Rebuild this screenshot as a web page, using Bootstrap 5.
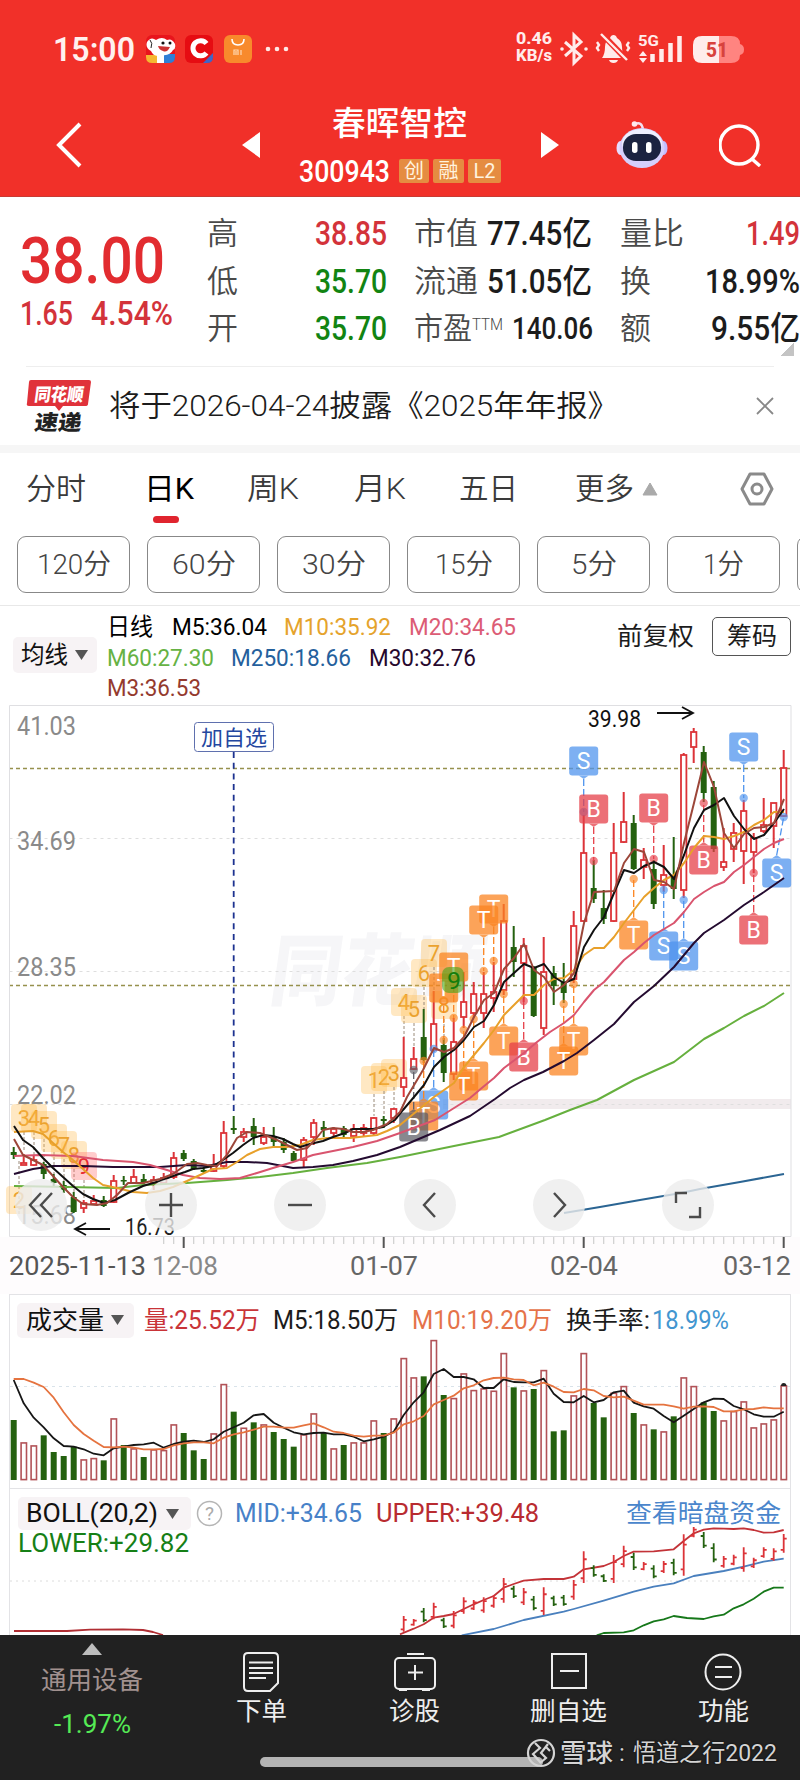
<!DOCTYPE html>
<html lang="zh-CN">
<head>
    <meta charset="UTF-8">
    <meta name="viewport" content="width=device-width, initial-scale=1.0">
    <title>春晖智控 300943</title>
    <link href="https://cdn.jsdelivr.net/npm/bootstrap@5.3.0/dist/css/bootstrap.min.css" rel="stylesheet">
    <style>
        body {
            width: 800px;
            height: 1780px;
            overflow: hidden;
            background: #fff;
            color: #1c1c1c;
            font-family: Roboto, "Noto Sans CJK SC", sans-serif;
            line-height: 1;
        }
        svg {
            display: block;
            flex-shrink: 0;
        }
        [data-w] {
            display: inline-block;
            flex-shrink: 0;
            white-space: nowrap;
            transform-origin: left center;
        }
        .app-head {
            height: 197px;
            background: #f13029;
            color: #fff;
            border-bottom: 1px solid #c93a33;
        }
        .status-row {
            height: 97px;
            padding-left: 53px;
        }
        .clock {
            font-size: 34px;
            font-weight: 600;
            color: #fff1ef;
        }
        .net-speed {
            font-size: 17px;
            line-height: 17px;
            font-weight: 800;
            color: #ffeceb;
            margin-left: 227px;
            margin-top: -3px;
        }
        .title-row {
            display: grid;
            grid-template-columns: 186px 57px 242px 75px 103px 42px;
            height: 96px;
            padding-left: 56px;
        }
        .stock-name {
            font-size: 33px;
            font-weight: 500;
            line-height: 48px;
            padding-left: 33px;
            margin-top: -4px;
            margin-bottom: 4px;
        }
        .stock-name span {
            margin-top: -3px;
        }
        .stock-code {
            font-size: 31px;
            font-weight: 500;
        }
        .tag {
            height: 24px;
            background: #e58c41;
            border-radius: 2px;
            color: #fff3df;
            font-size: 20px;
            line-height: 25px;
            text-align: center;
        }
        .quote {
            height: 169px;
            padding: 13px 0 13px 20px;
            display: grid;
            grid-template-columns: 187px 207px 206px 180px;
            font-size: 33px;
            font-weight: 500;
        }
        .quote .line {
            height: 47.5px;
            display: flex;
            align-items: center;
        }
        .quote .lbl {
            font-size: 31px;
            font-weight: 350;
            color: #4a4a4a;
        }
        .price {
            font-size: 65px;
            line-height: 65px;
            margin-top: 19px;
            color: #e22c30;
        }
        .up { color: #d3333a; }
        .down { color: #128412; }
        .corner {
            width: 13px;
            height: 13px;
            right: 6px;
            top: 343px;
            background: linear-gradient(135deg, transparent 50%, #c4c4c4 50%);
        }
        .news {
            height: 79px;
            margin: 0 26px;
            border-top: 1px solid #eee;
            font-size: 30px;
            font-weight: 350;
        }
        .news .logo-box {
            width: 65px;
            margin-right: 18px;
            overflow: visible;
        }
        .band {
            height: 8px;
            background: #f6f6f6;
        }
        .tabs {
            height: 83px;
            padding: 1px 0 0 26px;
            display: grid;
            grid-template-columns: 118px 103px 107px 105px 116px 165px 40px;
            font-size: 30px;
            font-weight: 350;
            color: #3a3a3a;
        }
        .tabs > div {
            height: 70px;
            display: flex;
            align-items: center;
        }
        .tab-on {
            color: #000;
            font-weight: 400;
            position: relative;
        }
        .tab-on::after {
            content: "";
            position: absolute;
            left: 9px;
            top: 62px;
            width: 26px;
            height: 7px;
            border-radius: 4px;
            background: #e0242e;
        }
        .pills {
            height: 70px;
            padding-left: 17px;
            gap: 17px;
            overflow: hidden;
            border-bottom: 1px solid #e8e8e8;
        }
        .pill {
            flex: 0 0 113px;
            height: 57px;
            border: 1px solid #888;
            border-radius: 9px;
            font-size: 28px;
            font-weight: 350;
            color: #444;
        }
        .ma-bar {
            height: 99px;
            font-size: 24px;
        }
        .drop {
            background: #f7f3f5;
            border-radius: 5px;
            color: #111;
        }
        .drop-ma {
            width: 84px;
            height: 36px;
            margin: 31px 10px 0 13px;
            padding-left: 8px;
        }
        .ma-list {
            padding-top: 6px;
        }
        .ma-list .line {
            height: 30.5px;
            display: flex;
            align-items: center;
        }
        .fq {
            font-size: 25px;
            height: 60px;
        }
        .chip-btn {
            width: 79px;
            height: 39px;
            border: 1px solid #555;
            border-radius: 5px;
            margin-left: 18px;
        }
        .drop-vol {
            width: 117px;
            height: 35px;
            padding-left: 9px;
            margin-right: 10px;
        }
        .panel {
            position: relative;
            margin: 0 9px;
            border: 1px solid #e3e3e6;
        }
        .vol-panel { height: 195px; }
        .vol-head {
            height: 50px;
            padding-left: 7px;
            font-size: 25px;
        }
        .boll-panel {
            height: 146px;
            border-width: 0 1px;
            overflow: hidden;
        }
        .boll-head {
            height: 40px;
            padding: 9px 0 0 8px;
            font-size: 25px;
        }
        .boll-low {
            padding: 2px 0 0 8px;
            font-size: 25px;
            color: #168016;
        }
        .drop-boll {
            width: 173px;
            height: 33px;
            padding-left: 8px;
            margin-right: 5px;
        }
        .layer {
            position: absolute;
            left: -10px;
            top: 0;
        }
        .bottom-bar {
            height: 145px;
            background: #212121;
            color: #eee;
            display: grid;
            grid-template-columns: 184px 154px 153px 155px 154px;
            font-size: 25px;
        }
        .bottom-bar > div {
            display: flex;
            flex-direction: column;
            align-items: center;
        }
        .act { padding-top: 17px; }
        .act svg { margin-bottom: 7px; }
        .act span { line-height: 26px; }
        .home-line {
            position: absolute;
            left: 260px;
            top: 1757px;
            width: 283px;
            height: 10px;
            border-radius: 5px;
            background: #b4b4b4;
        }
        .sign {
            position: absolute;
            left: 526px;
            top: 1738px;
            height: 30px;
            color: #d4d4d4;
            font-size: 24px;
            text-shadow: 0 0 2px #000;
        }
    </style>
</head>
<body>
    <div class="app-head">
        <div class="status-row d-flex align-items-center">
            <span class="clock" data-w="82">15:00</span>
            <svg width="106" height="30" viewBox="146 34 106 30" style="margin-left:11px">
                <rect x="146" y="35" width="29" height="28" rx="6" fill="#e8141c"/>
                <path d="M146 55h11v8h-5q-6 0-6-6z" fill="#f5b731"/><path d="M157 54h7v9h-7z" fill="#fff"/><path d="M164 54h11v3q0 6-6 6h-5z" fill="#2f7fd6"/>
                <path d="M147 42q4-6 9-2 6-4 11 0 5-2 8 4 1 5-2 6-3 6-11 5-8 3-11-4-6-3-4-9z" fill="#fff"/>
                <path d="M158 46l12 1q-3 6-7 4-4-1-5-5z" fill="#c33"/><circle cx="163" cy="43" r="1.600" fill="#111"/><circle cx="170" cy="43" r="1.500" fill="#111"/>
                <path d="M150 40q3 3 1 8" stroke="#222" fill="none"/>
                <rect x="185" y="35" width="28" height="28" rx="6" fill="#e60c12"/>
                <path d="M206.500 43.500a7.600 7.600 0 1 0 0 9.500" stroke="#fff" stroke-width="5" fill="none"/>
                <path d="M203 63l10-10v4q0 6-6 6z" fill="#3f66c8"/>
                <rect x="224" y="35" width="28" height="28" rx="6" fill="#f88a2c"/>
                <path d="M232 39q0 6 6 6t6-6" stroke="#fff" stroke-width="1.600" fill="none"/>
                <path d="M234 55v-5h4v5m-2-4v4m5-5v5" stroke="#ffd9b4" stroke-width="1.200" fill="none"/>
            </svg>
            <svg width="24" height="6" viewBox="0 0 24 6" style="margin-left:13px"><g fill="#ffe9e6"><circle cx="3" cy="3" r="2.300"/><circle cx="12" cy="3" r="2.300"/><circle cx="21" cy="3" r="2.300"/></g></svg>
            <div class="net-speed"><span data-w="36">0.46</span><br><span data-w="36">KB/s</span></div>
            <svg width="185" height="36" viewBox="559 30 185 36" style="margin-left:7px" fill="none" stroke="#ffeceb">
                <path d="M565 41l16 14-7 7V34l7 7-16 14" stroke-width="3"/>
                <circle cx="562" cy="48" r="1.800" fill="#ffeceb" stroke="none"/><circle cx="586" cy="48" r="1.800" fill="#ffeceb" stroke="none"/>
                <path d="M602 57q3-4 3-11 0-6 5-9 1-3 3.500-3t3.500 3q5 3 5 9 0 7 3 11z" fill="#ffeceb" stroke="none"/><path d="M609 59h9q-1 3-4.500 3t-4.500-3z" fill="#ffeceb" stroke="none"/>
                <path d="M602 33l25 26" stroke="#f13029" stroke-width="6"/><path d="M601 33l26 26" stroke-width="2.400"/>
                <path d="M597 41l2 3-2 3 2 3m30-9l-2 3 2 3-2 3" stroke-width="2.400"/>
                <path d="M639 55l4-5 4 5zM639 57l4 5 4-5z" fill="#ffeceb" stroke="none"/>
                <path d="M652.500 61v-8M661.500 61v-13M670.500 61V42M679.500 61V35" stroke-width="4.500"/>
                <text x="638" y="44.500" font-size="15" font-weight="700" fill="#ffeceb" stroke="none" textLength="21" lengthAdjust="spacingAndGlyphs">5G</text>
                <path d="M702 35h17v27h-17q-9 0-9-9v-9q0-9 9-9z" fill="#ffeceb" stroke="none"/>
                <path d="M719 35h12q9 0 9 8 4 1 4 5.500t-4 5.500q0 8-9 8h-12z" fill="#ff8480" stroke="none"/>
                <text x="706" y="55.500" font-size="21" font-weight="800" fill="#d8423d" stroke="none" textLength="22" lengthAdjust="spacingAndGlyphs">51</text>
            </svg>
        </div>
        <div class="title-row align-items-center">
            <svg width="26" height="46" viewBox="0 0 26 46"><path d="M24 2L3 23l21 21" fill="none" stroke="#fff" stroke-width="4"/></svg>
            <svg width="18" height="26" viewBox="0 0 18 26"><path d="M18 0v26L0 13z" fill="#fff"/></svg>
            <div>
                <div class="stock-name"><span data-w="135">春晖智控</span></div>
                <div class="d-flex align-items-center pt-1">
                    <span class="stock-code" data-w="91">300943</span>
                    <span class="tag" style="width:30px;margin-left:9px">创</span>
                    <span class="tag" style="width:31px;margin-left:4px">融</span>
                    <span class="tag" style="width:33px;margin-left:4px">L2</span>
                </div>
            </div>
            <svg width="18" height="26" viewBox="0 0 18 26"><path d="M0 0v26l18-13z" fill="#fff"/></svg>
            <svg width="52" height="50" viewBox="0 0 52 50">
                <path d="M19 4q7-3 8 6" fill="none" stroke="#f4dff0" stroke-width="2.500"/><circle cx="18.500" cy="4" r="2.800" fill="#ffe9ee"/>
                <ellipse cx="4.500" cy="28" rx="4" ry="7" fill="#e6dcff"/><ellipse cx="47.500" cy="28" rx="4" ry="7" fill="#c3bcff"/>
                <ellipse cx="26" cy="28" rx="22.500" ry="20" fill="#d5cffb"/><ellipse cx="26" cy="23" rx="20" ry="14" fill="#eef0ff"/>
                <rect x="7" y="14" width="38" height="27" rx="13" fill="#1b2340"/>
                <rect x="16" y="22" width="5.500" height="11" rx="2.700" fill="#fff"/><rect x="30" y="22" width="5.500" height="11" rx="2.700" fill="#fff"/>
            </svg>
            <svg width="44" height="44" viewBox="0 0 44 44" fill="none" stroke="#fff" stroke-width="3.400"><circle cx="20" cy="22" r="19"/><path d="M33 36l8 7"/></svg>
        </div>
    </div>

    <div class="quote">
        <div>
            <div class="price"><span data-w="145">38.00</span></div>
            <div class="up d-flex" style="margin-top:3px"><span data-w="53">1.65</span><span data-w="82" style="margin-left:18px">4.54%</span></div>
        </div>
        <div>
            <div class="line"><span class="lbl" data-w="31">高</span><span class="up" data-w="72" style="margin-left:77px">38.85</span></div>
            <div class="line"><span class="lbl" data-w="31">低</span><span class="down" data-w="72" style="margin-left:77px">35.70</span></div>
            <div class="line"><span class="lbl" data-w="31">开</span><span class="down" data-w="72" style="margin-left:77px">35.70</span></div>
        </div>
        <div>
            <div class="line"><span class="lbl" data-w="64">市值</span><span data-w="105" style="margin-left:9px">77.45亿</span></div>
            <div class="line"><span class="lbl" data-w="64">流通</span><span data-w="105" style="margin-left:9px">51.05亿</span></div>
            <div class="line"><span class="lbl" data-w="58">市盈</span><span class="lbl fs-6 pb-2" data-w="31">TTM</span><span data-w="81" style="margin-left:9px;font-size:31px">140.06</span></div>
        </div>
        <div>
            <div class="line justify-content-between"><span class="lbl" data-w="64">量比</span><span class="up" data-w="54">1.49</span></div>
            <div class="line justify-content-between"><span class="lbl" data-w="31">换</span><span data-w="95">18.99%</span></div>
            <div class="line justify-content-between"><span class="lbl" data-w="31">额</span><span data-w="89">9.55亿</span></div>
        </div>
        <div class="corner position-absolute"></div>
    </div>

    <div class="news d-flex align-items-center">
        <svg class="logo-box" width="65" height="54" viewBox="26 378 65 54" font-weight="900" font-size="18" font-family="Noto Sans CJK SC">
            <path d="M31 379h58q2 0 2 2l-3 22q0 2-3 2H63l-4 5-4-5H29q-3 0-2-3l2-21q0-2 2-2z" fill="#e0323a"/>
            <g transform="skewX(-8)"><text x="90" y="400" fill="#fff" textLength="49" lengthAdjust="spacingAndGlyphs">同花顺</text><text x="94" y="429" fill="#222" textLength="47" lengthAdjust="spacingAndGlyphs" font-size="21">速递</text></g>
        </svg>
        <span data-w="510">将于2026-04-24披露《2025年年报》</span>
        <svg class="ms-auto" width="18" height="18" viewBox="0 0 18 18"><path d="M1 1l16 16M17 1L1 17" stroke="#888" stroke-width="1.800"/></svg>
    </div>
    <div class="band"></div>

    <div class="tabs">
        <div><span data-w="60">分时</span></div>
        <div class="tab-on"><span data-w="50">日K</span></div>
        <div><span data-w="52">周K</span></div>
        <div><span data-w="52">月K</span></div>
        <div><span data-w="59">五日</span></div>
        <div><span data-w="59">更多</span><svg class="ms-2" width="16" height="14" viewBox="0 0 16 14"><path d="M8 1l7 12H1z" fill="#aaa" stroke="#aaa" stroke-linejoin="round"/></svg></div>
        <div><svg width="34" height="34" viewBox="0 0 34 34" fill="none" stroke="#8a8a8a" stroke-width="3" stroke-linejoin="round"><path d="M10 2h14l8 15-8 15H10L2 17z"/><circle cx="17" cy="17" r="5"/></svg></div>
    </div>
    <div class="pills d-flex">
        <div class="pill d-flex align-items-center justify-content-center"><span data-w="74">120分</span></div>
        <div class="pill d-flex align-items-center justify-content-center"><span data-w="64">60分</span></div>
        <div class="pill d-flex align-items-center justify-content-center"><span data-w="64">30分</span></div>
        <div class="pill d-flex align-items-center justify-content-center"><span data-w="58">15分</span></div>
        <div class="pill d-flex align-items-center justify-content-center"><span data-w="46">5分</span></div>
        <div class="pill d-flex align-items-center justify-content-center"><span data-w="41">1分</span></div>
        <div class="pill"></div>
    </div>

    <div class="ma-bar d-flex">
        <div class="drop drop-ma d-flex align-items-center"><span data-w="47">均线</span><svg style="margin-left:7px" width="13" height="10"><path d="M0 0h13l-6.500 10z" fill="#555"/></svg></div>
        <div class="ma-list">
            <div class="line"><span data-w="46" class="text-black">日线</span><span data-w="95" class="text-black" style="margin-left:19px">M5:36.04</span><span data-w="107" style="margin-left:17px;color:#e5a32c">M10:35.92</span><span data-w="107" style="margin-left:18px;color:#dc5c75">M20:34.65</span></div>
            <div class="line"><span data-w="107" style="color:#66b244">M60:27.30</span><span data-w="120" style="margin-left:17px;color:#24609c">M250:18.66</span><span data-w="107" style="margin-left:18px;color:#27082d">M30:32.76</span></div>
            <div class="line"><span data-w="94" style="color:#943a2e">M3:36.53</span></div>
        </div>
        <div class="fq d-flex align-items-center ms-auto" style="margin-right:9px"><span data-w="77">前复权</span><div class="chip-btn d-flex align-items-center justify-content-center"><span data-w="50">筹码</span></div></div>
    </div>

    <svg id="kline" width="800" height="589" viewBox="0 705 800 589"></svg>

    <div class="panel vol-panel">
        <svg class="layer" id="volume" width="800" height="193" viewBox="0 1295 800 193"></svg>
        <div class="vol-head position-relative d-flex align-items-center">
            <div class="drop drop-vol d-flex align-items-center"><span data-w="78">成交量</span><svg style="margin-left:7px" width="13" height="10"><path d="M0 0h13l-6.500 10z" fill="#555"/></svg></div>
            <span data-w="116" style="color:#c93438">量:25.52万</span>
            <span data-w="125" style="margin-left:13px">M5:18.50万</span>
            <span data-w="140" style="margin-left:14px;color:#e5734a">M10:19.20万</span>
            <span data-w="84" style="margin-left:14px">换手率:</span>
            <span data-w="77" style="margin-left:2px;color:#4396d0">18.99%</span>
        </div>
    </div>
    <div class="panel boll-panel">
        <svg class="layer" id="boll" width="800" height="146" viewBox="0 1489 800 146"></svg>
        <div class="boll-head position-relative d-flex align-items-center">
            <div class="drop drop-boll d-flex align-items-center"><span data-w="132">BOLL(20,2)</span><svg class="ms-2" width="13" height="10"><path d="M0 0h13l-6.500 10z" fill="#555"/></svg></div>
            <svg width="27" height="27" viewBox="0 0 27 27"><circle cx="13.500" cy="13.500" r="12" fill="none" stroke="#b5b5b5" stroke-width="1.500"/><text x="13.500" y="20" font-size="19" fill="#aaa" text-anchor="middle">?</text></svg>
            <span data-w="127" style="margin-left:12px;color:#4781c8">MID:+34.65</span>
            <span data-w="163" style="margin-left:14px;color:#b92b30">UPPER:+39.48</span>
            <span data-w="155" class="ms-auto" style="margin-right:9px;color:#4a86cc">查看暗盘资金</span>
        </div>
        <div class="boll-low position-relative"><span data-w="171">LOWER:+29.82</span></div>
    </div>

    <div class="bottom-bar">
        <div>
            <svg width="20" height="12" style="margin-top:8px"><path d="M10 0l10 12H0z" fill="#bdbdbd"/></svg>
            <span data-w="102" style="margin-top:13px;color:#a1918f">通用设备</span>
            <span data-w="77" style="margin-top:19px;color:#55ea55">-1.97%</span>
        </div>
        <div class="act">
            <svg width="36" height="40" viewBox="0 0 36 40" fill="none" stroke="#eee" stroke-width="2"><path d="M5 1h26q4 0 4 4v26l-8 8H5q-4 0-4-4V5q0-4 4-4z"/><path d="M6 10.500h24M6 16h24M6 21h24M6 26h17" stroke-width="1.800"/></svg>
            <span data-w="51">下单</span>
        </div>
        <div class="act">
            <svg width="42" height="40" viewBox="0 0 42 40" fill="none" stroke="#eee" stroke-width="2"><rect x="1" y="6" width="40" height="31" rx="4"/><path d="M13 2h17M21 13v15M14 20.500h15M5 38h8m15 0h8"/></svg>
            <span data-w="51">诊股</span>
        </div>
        <div class="act">
            <svg width="36" height="40" viewBox="0 0 36 40" fill="none" stroke="#eee" stroke-width="2"><path d="M1 2h34v34H1zM9 19h19"/></svg>
            <span data-w="77">删自选</span>
        </div>
        <div class="act">
            <svg width="38" height="40" viewBox="0 0 38 40" fill="none" stroke="#eee" stroke-width="2"><circle cx="19" cy="20" r="17.500"/><path d="M11 15h17M11 25h17"/></svg>
            <span data-w="51">功能</span>
        </div>
    </div>
    <div class="home-line"></div>
    <div class="sign d-flex align-items-center">
        <svg width="30" height="30" viewBox="0 0 30 30" fill="none" stroke="#d4d4d4" stroke-width="2.200"><circle cx="15" cy="15" r="13"/><path d="M9 5l5 5-7 6 8 9M22 6l-7 9 5 5-6 5M20 9l4 4"/></svg>
        <span data-w="53" style="margin-left:4px;font-size:25px;font-weight:500">雪球</span>
        <span style="margin:0 8px 0 6px">:</span>
        <span data-w="144">悟道之行2022</span>
    </div>

    <script src="https://cdn.jsdelivr.net/npm/bootstrap@5.3.0/dist/js/bootstrap.bundle.min.js"></script>
    <script>
        const RED = '#dc3338';
        const GREEN = '#24610f';
        const xAt = i => 13.7 + i * 10;

        // condense each label to its column width
        document.querySelectorAll('[data-w]').forEach(el => {
            const natural = el.getBoundingClientRect().width;
            const w = Number(el.dataset.w);
            el.style.transform = `scaleX(${w / natural})`;
            el.style.marginRight = (w - natural + (parseFloat(getComputedStyle(el).marginRight) || 0)) + 'px';
        });

        function poly(points, color, width) {
            return `<polyline points="${points}" fill="none" stroke="${color}" stroke-width="${width || 1.8}" stroke-linejoin="round"/>`;
        }
        function label(x, y, text, w, size, color, extra) {
            return `<text x="${x}" y="${y}" font-size="${size}" fill="${color}" textLength="${w}" lengthAdjust="spacingAndGlyphs" ${extra || ''}>${text}</text>`;
        }

        // colour, high, body top, body bottom, low
        const candles = [
            ['g',1147,1152,1155,1159],['r',1154,1163,1165,1165],['r',1156,1160,1165,1166],['g',1162,1164,1174,1179],['g',1174,1179,1183,1186],
            ['g',1181,1185,1190,1193],['g',1192,1197,1212,1213],['r',1200,1203,1208,1213],['r',1195,1201,1204,1205],['g',1196,1200,1206,1207],
            ['r',1175,1181,1202,1203],['g',1176,1180,1181,1185],['r',1169,1177,1183,1184],['g',1174,1179,1183,1185],['r',1176,1180,1183,1190],
            ['r',1173,1178,1183,1185],['r',1152,1158,1177,1179],['g',1150,1153,1159,1161],['g',1159,1161,1169,1170],['g',1167,1170,1172,1173],
            ['r',1154,1166,1171,1172],['r',1121,1133,1166,1169],['g',1116,1128,1130,1134],['r',1128,1132,1137,1142],['g',1118,1126,1137,1145],
            ['r',1127,1137,1143,1145],['g',1127,1136,1142,1147],['g',1138,1142,1150,1153],['g',1151,1153,1161,1162],['r',1137,1140,1160,1167],
            ['r',1119,1123,1137,1145],['g',1121,1127,1130,1137],['r',1127,1129,1133,1136],['g',1126,1128,1135,1137],['r',1124,1129,1136,1142],
            ['r',1124,1128,1133,1137],['r',1117,1118,1133,1135],['g',1116,1119,1121,1128],['r',1108,1109,1118,1123],['r',1037,1078,1087,1097],
            ['r',1047,1059,1069,1070],['g',1009,1037,1060,1063],['r',991,1024,1050,1052],['g',1038,1045,1073,1082],['r',1018,1042,1074,1080],
            ['r',972,1002,1017,1028],['r',982,994,1013,1018],['r',972,994,1013,1028],['r',962,992,998,1012],['r',904,921,990,995],
            ['g',926,947,962,977],['r',938,946,963,1002],['g',966,968,1016,1017],['r',937,972,1028,1035],['g',966,973,986,1005],
            ['g',963,982,993,1003],['r',911,926,979,983],['r',815,853,921,922],['g',860,888,899,903],['g',890,908,919,924],
            ['r',823,853,921,922],['r',792,822,842,843],['g',815,823,869,870],['r',848,860,867,879],['g',860,869,904,909],
            ['r',845,875,885,892],['g',837,877,889,899],['r',753,755,890,898],['r',728,732,747,763],['g',746,752,793,802],
            ['g',781,787,849,852],['r',828,862,867,871],['r',823,833,849,862],['r',800,811,851,884],['r',833,838,852,873],
            ['r',798,825,831,833],['r',803,803,826,848],['r',750,768,816,817]
        ];

        const averages = [
            ['#66b03e', '14,1186 67,1187 117,1188 143,1185 187,1183 227,1180 260,1177 293,1173 327,1168 367,1163 400,1157 454,1146 499,1137 545,1120 570,1110 597,1100 634,1080 654,1071 674,1062 704,1039 724,1028 744,1016 764,1006 784,993'],
            ['#2b6593', '564,1213 600,1207 640,1200 681,1193 700,1189 740,1182 784,1174'],
            ['#240b30', '14,1174 33,1169 53,1166 83,1166 113,1167 160,1167 187,1165 207,1166 227,1162 247,1162 267,1163 293,1168 313,1167 333,1165 353,1161 377,1155 400,1147 440,1130 470,1116 495,1099 510,1088 524,1080 543,1072 564,1061 577,1053 594,1040 614,1024 634,1002 654,986 674,967 694,943 704,933 724,920 744,905 764,892 784,878'],
            ['#d9546e', '14,1156 40,1155 73,1156 103,1160 133,1162 150,1165 167,1170 183,1175 200,1178 220,1179 240,1178 257,1173 273,1168 293,1162 313,1155 333,1151 353,1147 377,1141 400,1133 435,1120 470,1098 483,1087 494,1078 504,1068 524,1053 537,1042 550,1032 564,1023 574,1015 584,1002 594,990 604,982 614,971 624,960 634,952 644,943 654,935 674,923 684,912 694,899 704,892 714,886 724,882 734,872 744,865 754,857 764,849 774,843 784,839'],
            ['#e8a02a', '14,1132 33,1131 43,1134 53,1143 63,1152 73,1160 83,1169 93,1178 103,1185 117,1188 133,1192 147,1193 160,1191 173,1187 187,1181 200,1175 213,1169 227,1168 237,1162 247,1155 260,1149 273,1147 287,1147 300,1145 313,1140 327,1138 350,1138 377,1135 387,1131 400,1125 434,1097 454,1083 464,1067 474,1055 484,1043 494,1030 504,1015 514,1005 524,995 534,995 544,985 554,979 564,978 574,970 584,955 594,948 604,948 614,937 624,923 634,910 644,897 654,888 664,880 674,875 684,863 694,848 704,836 714,837 724,839 734,836 744,832 754,825 764,820 774,812 784,812'],
            ['#111', '14,1126 23,1140 33,1147 43,1158 53,1168 63,1177 73,1186 83,1194 93,1199 104,1203 115,1200 128,1193 143,1186 160,1181 173,1176 185,1172 193,1169 203,1168 213,1166 223,1160 233,1153 243,1145 253,1138 263,1135 273,1136 283,1139 293,1144 300,1147 310,1144 323,1141 333,1137 345,1133 353,1129 363,1129 373,1129 383,1127 395,1120 403,1110 414,1097 424,1085 434,1067 444,1057 454,1050 464,1040 474,1027 484,1021 494,1005 504,982 514,973 524,964 534,968 544,964 554,977 564,983 574,979 584,947 594,930 604,917 614,893 624,870 634,873 644,866 654,862 664,867 674,879 684,855 694,828 704,810 714,805 724,798 734,816 744,829 754,839 764,835 774,823 784,809'],
            ['#9c4639', '14,1139 23,1155 33,1160 43,1165 53,1176 63,1187 73,1197 83,1204 97,1205 107,1203 117,1195 128,1183 143,1183 160,1179 173,1174 187,1164 197,1163 207,1165 217,1166 227,1155 237,1138 247,1132 260,1133 277,1140 287,1145 297,1150 307,1148 315,1140 323,1130 333,1128 343,1129 353,1132 363,1132 373,1130 387,1124 400,1112 407,1097 423,1070 434,1048 444,1052 454,1048 464,1037 474,1017 484,1000 494,993 504,969 514,958 524,944 534,970 544,977 554,992 564,985 574,973 584,923 594,892 614,891 624,863 634,849 644,852 654,880 664,882 674,889 684,843 694,803 704,762 714,787 724,833 734,848 744,834 754,828 764,827 774,823 784,799']
        ];

        // letter, badge x, badge y, dot y, dot x when it differs
        const marks = [
            ['T',473.7,1076,1019],['T',463.7,1086,1030],['T',503.7,1041,994],['B',523.7,1057,1001],['T',573.7,1041,984],['T',563.7,1061,1004],
            ['T',443.7,988,1040],['T',453.7,967,1018],['T',493.7,909,961],['T',483.7,920,971],['S',433.7,1105,1049],['T',423.7,1116,1061],['G',413.7,1127,1070],
            ['S',583.7,761,812],['B',593.7,809,861],['B',653.7,808,859],['T',633.7,935,879],['S',663.7,946,890],['S',683.7,956,900],
            ['B',703.7,860,803],['S',743.7,747,798],['B',753.7,930,873],['S',776.7,873,817,783.7]
        ];
        const markColor = { S: '#4f94ee', B: '#e63f49', T: '#fb8420', G: '#5f5f68' };

        function drawMark([t, x, y, dotY, dotX]) {
            const dx = dotX || x;
            const c = markColor[t];
            const dir = dotY > y ? 1 : -1;
            const tip = y + dir * 18;
            return `<path d="M${x} ${tip}L${dx} ${dotY}" stroke="${c}" stroke-width="1.300" stroke-dasharray="7 3"/>
                <circle cx="${dx}" cy="${dotY}" r="4.200" fill="${c}" opacity=".65"/>
                <g fill="${c}" opacity=".74"><rect x="${x - 14.5}" y="${y - 14.5}" width="29" height="29" rx="3"/><path d="M${x - 5} ${y + dir * 14.5}h10L${x} ${tip}z"/></g>
                <text x="${x}" y="${y + 8}" font-size="23" fill="#fff" text-anchor="middle">${t === 'G' ? 'B' : t}</text>`;
        }

        // nine-turn counters: digit, x, y, stem end
        const counts = [
            [2,19,1200,1160],[3,24,1118,1150],[4,34,1118,1156],[5,44,1125,1162],[6,54,1138,1174],[7,64,1145,1181],[8,74,1155,1192],[9,84,1166,1200],
            [1,374,1080,1116],[2,384,1077,1116],[3,394,1073,1108],[4,404,1002,1037],[5,414,1009,1047],[6,424,973,1009],[7,434,953,991],[8,444,1005,1038]
        ];
        function drawCount([n, x, y, end]) {
            const c = n === 9 ? '#ff6a6a' : '#ffbc4e';
            return `<path d="M${x} ${y + 14}V${end}" stroke="#9a8a78" stroke-dasharray="3 2"/>
                <rect x="${x - 13}" y="${y - 14}" width="26" height="28" rx="4" fill="${c}" opacity=".34"/>
                <text x="${x}" y="${y + 8}" font-size="22" fill="${n === 9 ? '#e82d34' : '#eba22e'}" text-anchor="middle">${n}</text>`;
        }

        let k = `<path d="M0 1237h800v57H0z" fill="#fefcfd"/>
            <g transform="skewX(-8)">${label(408, 999, '同花顺', 214, 78, '#f6f6f8', 'font-weight="900" font-family="Noto Sans CJK SC"')}</g>
            <rect x="443" y="1099" width="348" height="10" fill="#f1ebed"/>
            <path d="M9.500 838.500H791M9.500 971.500H791M9.500 1104.500H791" stroke="#dedede" stroke-dasharray="3 4"/>
            <path d="M9 768.500H791M9 985.500H791" stroke="#96914d" stroke-width="1.400" stroke-dasharray="4 3"/>
            <path d="M9.500 1236.500V705.500H791v531z" fill="none" stroke="#dfdfe2"/>
            <path d="M233.700 752V1112" stroke="#1d3290" stroke-width="1.800" stroke-dasharray="6 4.700"/>
            <rect x="194.500" y="722.500" width="79" height="29" rx="3" fill="#fff" stroke="#5f70ae"/>
            ${label(201, 745, '加自选', 66, 21, '#2447a0')}`;
        [['41.03', 735], ['34.69', 850], ['28.35', 976], ['22.02', 1104], ['15.68', 1224]].forEach(([t, y]) => {
            k += label(17, y, t, 59, 25, '#8a8a8a');
        });
        k += counts.map(drawCount).join('');
        candles.forEach(([c, hi, top, bottom, lo], i) => {
            const x = xAt(i);
            const h = Math.max(bottom - top, 1.5);
            if (c === 'g') {
                k += `<path d="M${x} ${hi}V${lo}" stroke="${GREEN}" stroke-width="2"/><rect x="${x - 3}" y="${top}" width="6" height="${h}" fill="${GREEN}"/>`;
            } else {
                k += `<path d="M${x} ${hi}V${top}M${x} ${bottom}V${lo}" stroke="${RED}" stroke-width="2"/><rect x="${x - 2.7}" y="${top}" width="5.400" height="${h}" fill="#fff" stroke="${RED}" stroke-width="1.800"/>`;
            }
        });
        k += marks.map(drawMark).join('');
        k += `<rect x="442" y="967" width="22" height="26" rx="7" fill="#45a51b" opacity=".6"/>${label(447, 989, '9', 14, 23, '#137d0c')}`;
        k += averages.map(a => poly(a[1], a[0], 2)).join('');
        k += `<path d="M657 713h35M682 707l11 6-11 6M110 1229H75M86 1223l-11 6 11 6" fill="none" stroke="#111" stroke-width="1.800"/>
            ${label(588, 727, '39.98', 53, 23, '#111')}${label(125, 1235, '16.73', 50, 23, '#222')}`;

        // zoom and pan buttons over the plot
        const glyphs = [
            [41, '<path d="M0-12l-11 12 11 12M11-12L0 0l11 12"/>'],
            [171, '<path d="M-12 0h24M0-12v24"/>'],
            [300, '<path d="M-12 0h24"/>'],
            [430, '<path d="M5-12L-6 0 5 12"/>'],
            [559, '<path d="M-5-12L6 0-5 12"/>'],
            [688, '<path d="M-12-2v-10h11M12 2v10H1"/>']
        ];
        glyphs.forEach(([x, g]) => {
            k += `<g transform="translate(${x} 1205)"><circle r="26" fill="#ececec" opacity=".8"/><g fill="none" stroke="#4b4b4b" stroke-width="2.400">${g}</g></g>`;
        });
        for (let i = 15; i < 78; i++) {
            const big = [17, 37, 57, 77].includes(i);
            k += `<path d="M${xAt(i)} 1237v${big ? 11 : 7}" stroke="${big ? '#555' : '#cfcfcf'}" stroke-width="${big ? 2 : 1.2}"/>`;
        }
        k += label(9, 1275, '2025-11-13', 137, 25, '#555') + label(152, 1275, '12-08', 66, 25, '#888')
            + label(350, 1275, '01-07', 68, 25, '#666') + label(550, 1275, '02-04', 68, 25, '#666') + label(723, 1275, '03-12', 68, 25, '#666');
        document.getElementById('kline').innerHTML = k;

        // volume bars: top edge in thirds of a pixel below y = 1280, falling days listed apart
        const volTops = [420,487,496,466,516,528,500,538,534,541,415,495,505,531,508,510,433,459,511,537,460,312,395,443,427,433,456,477,500,463,400,459,505,495,487,487,421,459,415,
            234,292,289,180,345,354,280,330,325,332,219,322,331,327,270,454,451,346,219,369,412,338,318,399,433,448,454,409,292,318,367,393,421,393,364,442,430,418,316];
        const volDown = [0,3,4,5,6,9,11,13,17,18,19,22,24,26,27,28,31,33,37,41,43,50,52,54,55,58,59,62,64,66,69,70];
        const vol5 = [300,370,413,442,475,498,500,508,521,526,505,500,495,493,488,503,492,485,482,486,478,455,442,428,406,402,428,443,457,463,459,458,463,463,470,484,478,470,455,
            405,367,337,282,267,291,291,298,324,324,298,306,307,307,296,341,366,367,348,367,360,337,332,368,379,386,408,427,407,387,367,356,357,378,388,403,410,410,395];
        const vol10 = [297,297,308,321,353,397,435,462,482,501,502,500,503,508,508,507,496,490,487,487,490,473,463,457,449,440,440,443,443,436,430,442,455,459,467,470,467,467,458,
            433,424,408,373,360,347,325,316,301,294,293,298,300,316,308,320,336,337,327,331,348,352,350,362,374,374,374,379,386,380,379,381,394,394,388,387,382,385,385];
        const vy = z => 1280 + z / 3;
        const series = a => a.map((z, i) => `${xAt(i)},${vy(z).toFixed(1)}`).join(' ');
        let v = '<path d="M10 1386.500H791" stroke="#d9e3ea" stroke-dasharray="3 4"/>';
        volTops.forEach((z, i) => {
            const x = xAt(i);
            const y = vy(z);
            v += volDown.includes(i)
                ? `<rect x="${x - 3}" y="${y}" width="6" height="${1480 - y}" fill="${GREEN}"/>`
                : `<rect x="${x - 2.6}" y="${y + 0.6}" width="5.400" height="${1479 - y}" fill="#fff" stroke="#b25358" stroke-width="1.600"/>`;
        });
        v += poly(series(vol5), '#161616') + poly(series(vol10), '#e5733f') + '<path d="M781 1386q0-3 2.700-3t2.700 3z" fill="#222"/>';
        document.getElementById('volume').innerHTML = v;

        // BOLL: colour, top, bottom, starting with bar 39
        const sticks = [['r',408,455],['r',417,437],['g',384,427],['r',368,418],['g',413,444],['r',393,445],['r',352,401],['r',360,390],['r',352,398],['r',345,383],
            ['r',294,368],['g',317,354],['r',324,375],['g',348,391],['r',322,405],['g',347,378],['g',345,377],['r',300,359],['r',214,309],['g',256,290],
            ['g',283,306],['r',225,309],['r',197,262],['g',218,270],['r',246,271],['g',256,295],['r',243,279],['g',236,286],['r',163,287],['r',141,172],
            ['g',156,204],['g',190,247],['r',228,263],['r',224,256],['r',202,275],['r',233,264],['r',202,233],['r',205,242],['r',162,218]];
        const upper = [[0,463],[41,446],[71,433],[101,413],[131,408],[161,402],[191,387],[221,373],[251,360],[281,348],[311,323],[341,312],[371,302],[431,297],[491,297],[521,290],[551,268],[611,258],[641,246],[671,228],[701,215],[761,214],[821,208],[851,183],[881,160],[911,149],[941,145],[971,146],[1001,147],[1031,145],[1061,150],[1091,158],[1121,157],[1151,150]];
        const mid = [[185,466],[281,447],[371,420],[491,395],[521,387],[611,362],[701,335],[761,320],[821,310],[881,288],[971,273],[1031,260],[1091,245],[1151,236]];
        const lower = [[590,466],[611,459],[671,457],[701,451],[731,436],[761,424],[791,418],[821,408],[861,414],[911,417],[941,409],[971,404],[1001,385],[1031,373],[1061,356],[1091,335],[1121,323],[1151,323]];
        const band = a => a.map(([x, y]) => `${(400 + x / 3).toFixed(1)},${(1480 + y / 3).toFixed(1)}`).join(' ');
        let b = '<path d="M10 1581H791" stroke="#dcdcdc" stroke-dasharray="2 4"/>';
        b += poly(band(upper), '#c33338') + poly(band(mid), '#4a80be') + poly(band(lower), '#16781a')
            + poly('14,1631 67,1631 90,1629.700 123,1629.300 143,1630 153,1632 163,1635', '#b02e33');
        sticks.forEach(([c, top, bottom], j) => {
            const x = xAt(39 + j);
            const y1 = 1480 + top / 3;
            const y2 = 1480 + bottom / 3;
            const near = y1 + (y2 - y1) * 0.25;
            const far = y1 + (y2 - y1) * 0.85;
            b += `<path d="M${x} ${y1}V${y2}M${x - 3} ${c === 'r' ? far : near}h3M${x} ${c === 'r' ? near : far}h3" stroke="${c === 'r' ? RED : GREEN}" stroke-width="1.800"/>`;
        });
        document.getElementById('boll').innerHTML = b;
    </script>
</body>
</html>
